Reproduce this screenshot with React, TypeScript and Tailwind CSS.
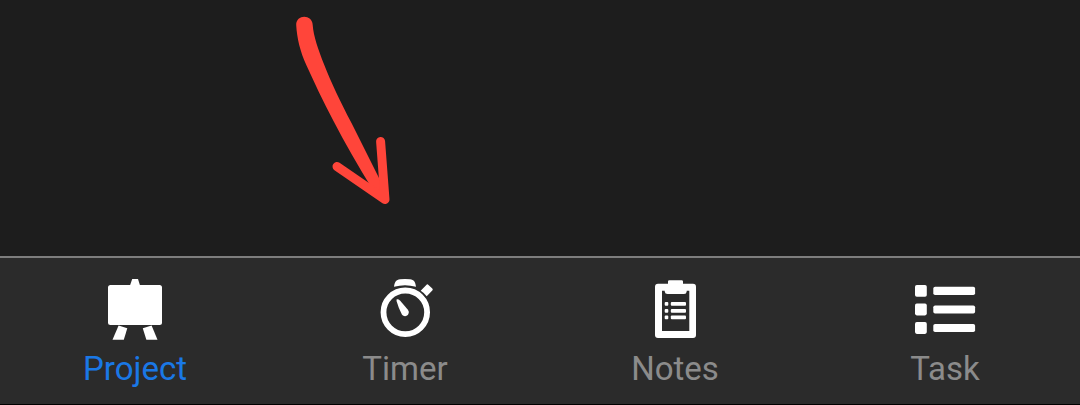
import type { ReactNode } from "react";

function ProjectIcon() {
  return (
    <svg className="h-[68px] w-[68px]" viewBox="101 274 68 68" fill="white">
      <rect x="108" y="285" width="54" height="40" rx="2.5" />
      <path d="M132.2 279h5.8l2.2 7h-10.4z" />
      <path d="M118.6 325.6L127.3 328.3L123.8 339.8H112.5z" />
      <path d="M151.6 325.6L142.8 328.3L146.4 339.8H157.5z" />
    </svg>
  );
}

function TimerIcon() {
  return (
    <svg className="h-[68px] w-[68px]" viewBox="371 274 68 68" fill="white">
      <circle cx="405.3" cy="312.3" r="21.8" fill="none" stroke="white" strokeWidth="5.8" />
      <path d="M394 286.7C394.8 281.5 396.2 279.8 400 279.2Q405 278.6 410 279.2C414 279.8 415.3 281.5 416 286.7Q405 283.7 394 286.7z" />
      <path d="M426.3 284.9Q427.4 283.8 428.5 284.9L432.3 288.4Q433.3 289.4 432.3 290.5L426.7 296.3Q424.5 293 420.7 290.7z" />
      <path d="M396.8 299.3Q398.4 299 400.2 300.7L407.9 309.8C411 314 405.4 318.7 401.9 314.6Q398.5 308 396.7 301.5Q396.3 299.9 396.8 299.3z" />
    </svg>
  );
}

function NotesIcon() {
  return (
    <svg className="h-[68px] w-[68px]" viewBox="641 274 68 68" fill="white">
      <rect x="655" y="283.8" width="41" height="54.2" rx="3" />
      <path d="M662 290.7h27.3V331H662z" fill="#2b2b2b" />
      <path d="M664.7 284H668V281.5Q668 280.2 669.4 280.2H681.6Q683 280.2 683 281.5V284H686.7V291.5Q686.5 294 684 294H667.5Q665 294 664.7 291.5z" />
      <rect x="664.7" y="302" width="3.6" height="3.8" rx="1" />
      <rect x="670.8" y="302" width="15.2" height="3.8" rx="1" />
      <rect x="664.7" y="309" width="3.6" height="3.8" rx="1" />
      <rect x="670.8" y="309" width="15.2" height="3.8" rx="1" />
      <rect x="664.7" y="315.5" width="3.6" height="3.8" rx="1" />
      <rect x="670.8" y="315.5" width="15.2" height="3.8" rx="1" />
    </svg>
  );
}

function TaskIcon() {
  return (
    <svg className="h-[68px] w-[68px]" viewBox="911 274 68 68" fill="white">
      <rect x="915" y="285" width="11.8" height="11.8" rx="1.8" />
      <rect x="915" y="303.6" width="11.8" height="11.8" rx="1.8" />
      <rect x="915" y="322.1" width="11.8" height="11.8" rx="1.8" />
      <rect x="933.3" y="286.8" width="41.8" height="8.2" rx="1.8" />
      <rect x="933.3" y="305.4" width="41.8" height="8.2" rx="1.8" />
      <rect x="933.3" y="323.9" width="41.8" height="8.2" rx="1.8" />
    </svg>
  );
}

function Tab({ label, active, icon }: { label: string; active?: boolean; icon: ReactNode }) {
  return (
    <button className="flex flex-1 flex-col items-center pt-4">
      {icon}
      <span
        className={`mt-[7px] text-[33px] leading-10 ${active ? "text-[#1a78e6]" : "text-[#8b8b8b]"}`}
      >
        {label}
      </span>
    </button>
  );
}

export default function App() {
  return (
    <div className="flex h-[405px] w-[1080px] flex-col overflow-hidden bg-[#1d1d1d] font-['Roboto',sans-serif]">
      <main className="h-64 shrink-0">
        <svg className="h-64 w-full" viewBox="0 0 1080 256" fill="#ff453a">
          <path d="M296.2 25C296 14 312.4 14 312.7 25C313.5 36 318 49 324.3 65C331 82 340 101 351.5 123L379 178L385 199L372 188.5C358 166 345 143 333.5 121C323 101 314 82 306.3 65C300 51 297 38 296.2 25z" />
          <path
            d="M337 166.5L385 199.5L380.6 141.5"
            stroke="#ff453a"
            strokeWidth="9"
            strokeLinecap="round"
            strokeLinejoin="round"
            fill="none"
          />
        </svg>
      </main>
      <nav className="flex h-[149px] shrink-0 border-t-2 border-b border-t-[#7d7d7d] border-b-black bg-[#2b2b2b]">
        <Tab label="Project" active icon={<ProjectIcon />} />
        <Tab label="Timer" icon={<TimerIcon />} />
        <Tab label="Notes" icon={<NotesIcon />} />
        <Tab label="Task" icon={<TaskIcon />} />
      </nav>
    </div>
  );
}
